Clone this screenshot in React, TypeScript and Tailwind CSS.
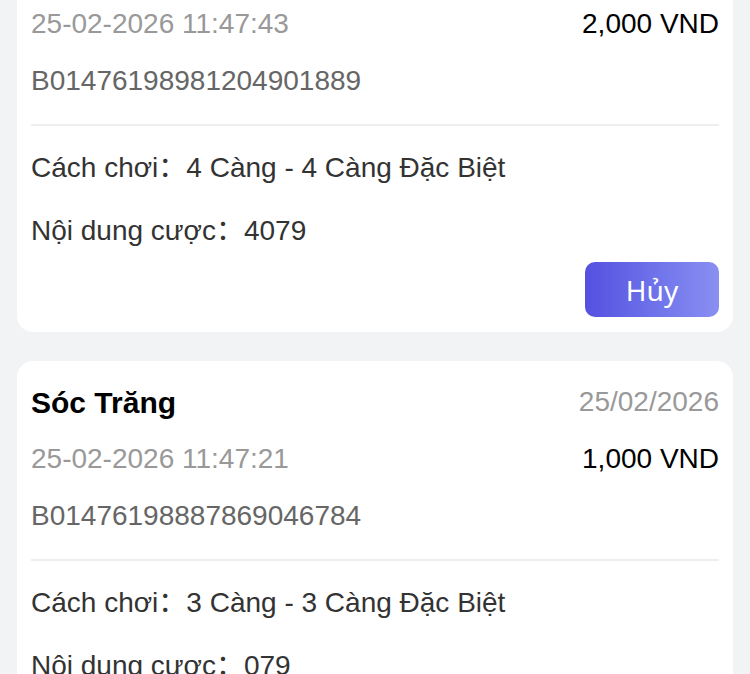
const bets = [
  {
    province: "Sóc Trăng",
    drawDate: "25/02/2026",
    time: "25-02-2026 11:47:43",
    amount: "2,000 VND",
    code: "B01476198981204901889",
    play: "4 Càng - 4 Càng Đặc Biệt",
    content: "4079",
    cancellable: true,
  },
  {
    province: "Sóc Trăng",
    drawDate: "25/02/2026",
    time: "25-02-2026 11:47:21",
    amount: "1,000 VND",
    code: "B01476198887869046784",
    play: "3 Càng - 3 Càng Đặc Biệt",
    content: "079",
    cancellable: true,
  },
];

const font = {
  fontFamily: '"Liberation Sans", Arial, "Noto Sans CJK SC", sans-serif',
};

export default function App() {
  return (
    <div className="min-h-screen bg-[#f2f3f5] overflow-hidden" style={font}>
      <div className="flex flex-col gap-[29px] px-[17px] -mt-[74px] pb-8">
        {bets.map((bet, index) => (
          <div key={index} className="bg-white rounded-[16px] px-[14px] pt-[21px] pb-[15px]">
            <div className="flex items-center justify-between h-[40px]">
              <span className="text-[30px] font-bold text-black">{bet.province}</span>
              <span className="text-[28px] text-[#999]">{bet.drawDate}</span>
            </div>
            <div className="flex items-center justify-between h-[40px] mt-[17px]">
              <span className="text-[28px] text-[#999]">{bet.time}</span>
              <span className="text-[28px] text-black">{bet.amount}</span>
            </div>
            <div className="flex items-center h-[40px] mt-[17px] text-[28px] text-[#666]">
              {bet.code}
            </div>
            <div className="h-[2px] bg-[#eeeeee] mt-[23px]" />
            <div className="flex items-center h-[40px] mt-[22px] text-[28px] text-[#333]">
              Cách chơi：{bet.play}
            </div>
            <div className="flex items-center h-[40px] mt-[23px] text-[28px] text-[#333]">
              Nội dung cược：{bet.content}
            </div>
            {bet.cancellable && (
              <div className="flex justify-end mt-[11px]">
                <button
                  className="w-[134px] h-[55px] rounded-[10px] bg-gradient-to-r from-[#5450e0] to-[#8a8ff2] text-white text-[28px]"
                  style={{ fontFamily: '"Noto Sans", sans-serif' }}
                >
                  Hủy
                </button>
              </div>
            )}
          </div>
        ))}
      </div>
    </div>
  );
}
